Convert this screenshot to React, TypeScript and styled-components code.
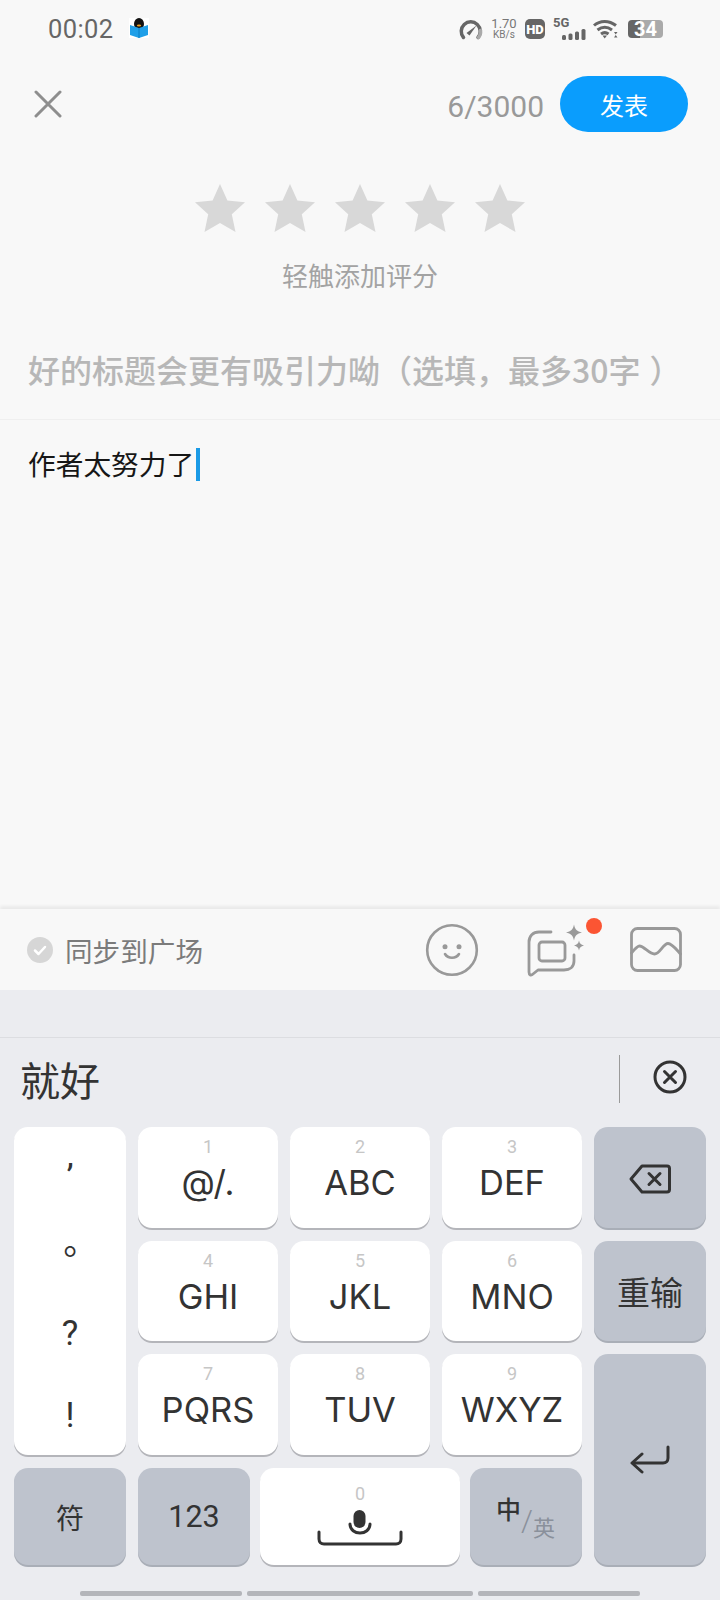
import React from "react";
import styled, { createGlobalStyle } from "styled-components";

const GlobalStyle = createGlobalStyle`
  html, body {
    margin: 0;
    padding: 0;
    background: #f8f8f8;
  }
  * {
    box-sizing: border-box;
  }
`;

const CJK = `"Noto Sans CJK SC", sans-serif`;
const LATIN = `Roboto, "Noto Sans CJK SC", sans-serif`;

const Page = styled.div`
  width: 720px;
  height: 1600px;
  display: flex;
  flex-direction: column;
  background: #f8f8f8;
  overflow: hidden;
  font-family: ${LATIN};
`;

const StatusBar = styled.div`
  height: 58px;
  display: flex;
  align-items: center;
  padding: 0 57px 0 48px;
  flex-shrink: 0;
`;

const Clock = styled.span`
  font-size: 25.5px;
  color: #666;
  letter-spacing: 0.4px;
  margin-right: 15px;
`;

const StatusRight = styled.div`
  margin-left: auto;
  display: flex;
  align-items: center;
`;

const Speed = styled.div`
  display: flex;
  flex-direction: column;
  align-items: center;
  width: 24px;
  margin: 0 9px 0 9px;
  color: #777;
`;

const SpeedValue = styled.span`
  font-size: 13px;
  line-height: 12px;
`;

const SpeedUnit = styled.span`
  font-size: 10px;
  line-height: 10px;
`;

const HdBadge = styled.span`
  width: 20px;
  height: 20px;
  border-radius: 5px;
  background: #666;
  color: #fff;
  font-size: 13px;
  font-weight: 900;
  display: flex;
  align-items: center;
  justify-content: center;
  margin-right: 8px;
`;

const Signal = styled.div`
  position: relative;
  width: 33px;
  height: 22px;
  margin-right: 7px;
`;

const SignalLabel = styled.span`
  position: absolute;
  left: 0;
  top: -1px;
  font-size: 13px;
  line-height: 12px;
  font-weight: 700;
  color: #666;
`;

const Battery = styled.div`
  width: 35px;
  height: 18px;
  margin-left: 10px;
  border-radius: 4px;
  background: linear-gradient(90deg, #666 0 34%, #aaa 34% 100%);
  color: #fff;
  font-size: 20px;
  font-weight: 700;
  display: flex;
  align-items: center;
  justify-content: center;
`;

const Header = styled.div`
  display: flex;
  align-items: center;
  margin-top: 18px;
  height: 56px;
  padding: 0 32px 0 34px;
  flex-shrink: 0;
`;

const Counter = styled.span`
  margin-left: auto;
  padding-top: 4px;
  font-size: 30px;
  color: #999;
`;

const PublishButton = styled.button`
  width: 128px;
  height: 56px;
  margin-left: 16px;
  border: 0;
  border-radius: 28px;
  background: #0a9dfd;
  color: #fff;
  font-family: ${CJK};
  font-size: 24px;
`;

const Rating = styled.div`
  margin-top: 52px;
  display: flex;
  flex-direction: column;
  align-items: center;
  flex-shrink: 0;
`;

const Stars = styled.div`
  display: flex;
  gap: 20px;
`;

const RatingHint = styled.div`
  margin-top: 28px;
  font-family: ${CJK};
  font-size: 26px;
  line-height: 30px;
  color: #a3a3a3;
`;

const TitleRow = styled.div`
  padding: 56px 0 27px 28px;
  font-family: ${CJK};
  font-size: 32px;
  font-weight: 500;
  line-height: 46px;
  color: #b7b7b7;
  border-bottom: 1px solid #efefef;
  white-space: nowrap;
  flex-shrink: 0;
`;

const TitleMark = styled.span<{ $before?: number }>`
  margin-left: ${(p) => p.$before ?? 0}px;
`;

const Body = styled.div`
  flex: 1;
  padding: 28px 0 0 28px;
  display: flex;
  align-items: flex-start;
  font-family: ${CJK};
  font-size: 27.7px;
  line-height: 30px;
  color: #161616;
`;

const Caret = styled.span`
  width: 4px;
  height: 33px;
  margin-left: 2px;
  background: #1a9ae6;
`;

const Toolbar = styled.div`
  height: 81px;
  display: flex;
  align-items: center;
  padding-left: 27px;
  background: #f8f8f8;
  box-shadow: 0 -3px 3px rgba(0, 0, 0, 0.06);
  position: relative;
  flex-shrink: 0;
`;

const SyncLabel = styled.span`
  margin-left: 12px;
  font-family: ${CJK};
  font-size: 27.6px;
  color: #7b7b7b;
`;

const ToolIcons = styled.div`
  margin-left: auto;
  display: flex;
  align-items: center;
`;

const Keyboard = styled.div`
  flex-shrink: 0;
  height: 610px;
  background: #ebecf0;
  display: flex;
  flex-direction: column;
`;

const ComposeBar = styled.div`
  margin-top: 47px;
  height: 90px;
  padding: 0 33px 8px 20px;
  border-top: 1px solid #dcdde1;
  display: flex;
  align-items: center;
  font-family: ${CJK};
  font-size: 40px;
  color: #333;
`;

const ComposeDivider = styled.span`
  margin-left: auto;
  width: 1px;
  height: 48px;
  background: #9a9a9a;
  margin-right: 33px;
`;

const KeyGrid = styled.div`
  display: grid;
  grid-template-columns: 112px 444px 112px;
  grid-template-rows: 101px 100px 101px 97px;
  column-gap: 12px;
  row-gap: 13px;
  padding: 0 14px;
`;

const KeyRow = styled.div<{ $gap: number }>`
  grid-column: 2;
  display: flex;
  gap: ${(p) => p.$gap}px;
`;

const Key = styled.div<{ $fn?: boolean; $span?: number; $width?: number }>`
  display: flex;
  flex-direction: column;
  align-items: center;
  justify-content: center;
  border-radius: 14px;
  background: ${(p) => (p.$fn ? "#bec3cd" : "#fff")};
  box-shadow: 0 2px 0 ${(p) => (p.$fn ? "#a9aeb7" : "#b4b5ba")};
  color: #333;
  ${(p) => (p.$span ? `grid-row: span ${p.$span};` : "")}
  ${(p) => (p.$width ? `width: ${p.$width}px; flex-shrink: 0;` : "flex: 1;")}
`;

const DigitHint = styled.span`
  font-size: 18px;
  line-height: 22px;
  color: #c6c6c6;
`;

const DigitLabel = styled.span`
  font-family: Inter, sans-serif;
  font-size: 34.5px;
  line-height: 46px;
  margin-top: 2px;
  margin-bottom: 13px;
`;

const PunctColumn = styled(Key)`
  justify-content: space-around;
`;

const PunctMark = styled.span`
  font-size: 35px;
  line-height: 48px;
  height: 44px;
`;

const Comma = styled(PunctMark)`
  line-height: 64px;
`;

const RoundStop = styled(PunctMark)`
  font-family: "Noto Sans CJK TC", sans-serif;
  line-height: 44px;
`;

const FnLabel = styled.span<{ $size: number }>`
  font-family: ${CJK};
  font-size: ${(p) => p.$size}px;
  color: #333;
`;

const NumLabel = styled.span`
  font-size: 30.5px;
`;

const SpaceHint = styled(DigitHint)`
  margin-bottom: 5px;
`;

const LangToggle = styled.div`
  display: flex;
  width: 60px;
  height: 42px;
  font-family: ${CJK};
`;

const LangMain = styled.span`
  align-self: flex-start;
  font-size: 25px;
  line-height: 25px;
  font-weight: 500;
  color: #333;
`;

const LangSlash = styled.span`
  align-self: flex-end;
  font-size: 30px;
  line-height: 34px;
  color: #8a909b;
  font-weight: 300;
  font-family: ${LATIN};
`;

const LangAlt = styled.span`
  align-self: flex-end;
  font-size: 22px;
  line-height: 24px;
  color: #8a909b;
`;

const HomeBar = styled.div`
  margin-top: 26px;
  padding-left: 80px;
  display: flex;
  gap: 5px;
`;

const HomeSegment = styled.span<{ $w: number }>`
  width: ${(p) => p.$w}px;
  height: 5px;
  border-radius: 2px;
  background: #b4b5ba;
`;

const StarIcon = () => (
  <svg width="50" height="48" viewBox="0 0 50 48">
    <path d="M25 0l7.4 16.4L50 18.3 36.800 30.300 40.500 48 25 39 9.500 48l3.700-17.700L0 18.300l17.600-1.900z" fill="#d8d8d8" />
  </svg>
);

const CloseIcon = () => (
  <svg width="28" height="28" viewBox="0 0 28 28" fill="none" stroke="#8e8e8e" strokeWidth="3" strokeLinecap="round">
    <path d="M2 2l24 24M26 2L2 26" />
  </svg>
);

const QqReadIcon = () => (
  <svg width="20" height="20" viewBox="0 0 20 20" style={{ marginBottom: 2 }}>
    <rect width="20" height="20" fill="#fff" />
    <ellipse cx="10" cy="6" rx="5" ry="6" fill="#111" />
    <ellipse cx="10" cy="7.500" rx="2.200" ry="1" fill="#f0a020" />
    <path d="M1 7l9 3 9-3v10l-9 3-9-3z" fill="#1f9fe8" />
    <path d="M10 10v10" stroke="#0b7fc4" strokeWidth="1" />
  </svg>
);

const GaugeIcon = () => (
  <svg width="24" height="21" viewBox="0 0 24 21" fill="none">
    <path d="M4.500 18.500A9.500 9.500 0 1 1 19 18.500" stroke="#666" strokeWidth="3.500" strokeLinecap="round" />
    <path d="M19.500 18.500a9.500 9.500 0 0 0 2-7" stroke="#aaa" strokeWidth="3.500" strokeLinecap="round" />
    <path d="M7.500 14L17.500 6.500 10.500 16.500z" fill="#666" />
  </svg>
);

const SignalBars = () => (
  <svg width="24" height="11" viewBox="0 0 24 11" fill="#666" style={{ position: "absolute", right: 0, bottom: 0 }}>
    <rect x="0" y="6" width="4" height="5" rx="1.500" />
    <rect x="6.500" y="4.500" width="4" height="6.500" rx="1.500" />
    <rect x="13" y="2.500" width="4" height="8.500" rx="1.500" />
    <rect x="19.500" y="0" width="4" height="11" rx="1.500" />
  </svg>
);

const WifiIcon = () => (
  <svg width="25" height="20" viewBox="0 0 25 20" fill="none" stroke="#666" strokeWidth="3">
    <path d="M1 6.500C7 1 16 1 23 6.500" />
    <path d="M4.500 11c4.500-3.500 10-3.500 14.500 0" />
    <path d="M8 15c2.500-1.800 5-1.800 7.500 0" />
    <path d="M9.500 16.500h4.500L11.700 19.500z" fill="#666" stroke="none" />
    <path d="M21 13h3.500L22.700 15.500zM21 18.500h3.500L22.700 16z" fill="#666" stroke="none" />
  </svg>
);

const CheckBadge = () => (
  <svg width="26" height="26" viewBox="0 0 26 26">
    <circle cx="13" cy="13" r="13" fill="#d6d6d6" />
    <path d="M8 13.500l3.500 3.500L18 10" fill="none" stroke="#fff" strokeWidth="2.500" strokeLinecap="round" strokeLinejoin="round" />
  </svg>
);

const SmileIcon = () => (
  <svg width="54" height="54" viewBox="0 0 54 54" fill="none" stroke="#999" strokeWidth="2.600" style={{ marginRight: 46 }}>
    <circle cx="27" cy="27" r="24.800" />
    <circle cx="20" cy="23.700" r="2.500" fill="#999" stroke="none" />
    <circle cx="34" cy="23.700" r="2.500" fill="#999" stroke="none" />
    <path d="M20 31c3 5 11 5 14 0" strokeLinecap="round" />
  </svg>
);

const AiChatIcon = () => (
  <svg width="78" height="64" viewBox="0 -2 78 64" fill="none" stroke="#999" strokeWidth="2.800" strokeLinecap="round" strokeLinejoin="round" style={{ marginRight: 27 }}>
    <path d="M26 12h-12c-6 0-10 4-10 10v30c0 3 2 4 4 2l5-4h26c6 0 10-3 10-9v-6" />
    <rect x="14" y="22" width="26" height="19" rx="3" />
    <path d="M49 4.500c1 5 3 7 8 8-5 1-7 3-8 8-1-5-3-7-8-8 5-1 7-3 8-8z" fill="#999" stroke="none" />
    <path d="M54 20.500c.6 3 1.800 4.200 5 5-3.200.8-4.400 2-5 5-.6-3-1.800-4.200-5-5 3.200-.8 4.400-2 5-5z" fill="#999" stroke="none" />
    <circle cx="69" cy="6" r="8" fill="#fb5533" stroke="none" />
  </svg>
);

const PictureIcon = () => (
  <svg width="52" height="45" viewBox="0 0 52 45" fill="none" stroke="#999" strokeWidth="2.800" strokeLinejoin="round" style={{ marginRight: 38 }}>
    <rect x="1.500" y="1.500" width="49" height="42" rx="6" />
    <path d="M1.500 26C4 23 7 19 9.500 19 14 19 19 27 24.500 27 30 27 33 16.500 38 16.500 42 16.500 46 22 50.500 27" strokeLinecap="round" />
  </svg>
);

const ClearIcon = () => (
  <svg width="34" height="34" viewBox="0 0 34 34" fill="none" stroke="#333" strokeWidth="3" strokeLinecap="round" style={{ marginBottom: 4 }}>
    <circle cx="17" cy="17" r="15" />
    <path d="M11.500 11.500l11 11M22.500 11.500l-11 11" />
  </svg>
);

const BackspaceIcon = () => (
  <svg width="42" height="30" viewBox="0 0 42 30" fill="none" stroke="#333" strokeWidth="3" strokeLinejoin="round" style={{ marginTop: 2 }}>
    <path d="M13 2h25c1.500 0 2.500 1 2.500 2.500v21c0 1.500-1 2.500-2.500 2.500H13L2 15z" />
    <path d="M20 9.500l11 11M31 9.500l-11 11" strokeLinecap="round" />
  </svg>
);

const EnterIcon = () => (
  <svg width="40" height="30" viewBox="0 0 40 30" fill="none" stroke="#333" strokeWidth="3" strokeLinecap="round" strokeLinejoin="round">
    <path d="M38 2v11c0 3-2 5-5 5H3" />
    <path d="M12 9l-10 9 10 9" />
  </svg>
);

const MicSpaceIcon = () => (
  <svg width="86" height="36" viewBox="0 0 86 36" fill="none" stroke="#333" strokeWidth="3" strokeLinecap="round" style={{ marginBottom: 4 }}>
    <rect x="36.500" y="0" width="12" height="18" rx="6" fill="#333" stroke="none" />
    <path d="M33 14c0 12 20 12 20 0" />
    <path d="M2 22v7c0 3 2 5 5 5h72c3 0 5-2 5-5v-7" />
  </svg>
);

const digitRows = [
  [
    ["1", "@/."],
    ["2", "ABC"],
    ["3", "DEF"],
  ],
  [
    ["4", "GHI"],
    ["5", "JKL"],
    ["6", "MNO"],
  ],
  [
    ["7", "PQRS"],
    ["8", "TUV"],
    ["9", "WXYZ"],
  ],
];

const DigitKeys = ({ row }: { row: string[][] }) => (
  <KeyRow $gap={12}>
    {row.map(([hint, label]) => (
      <Key key={hint}>
        <DigitHint>{hint}</DigitHint>
        <DigitLabel>{label}</DigitLabel>
      </Key>
    ))}
  </KeyRow>
);

const App: React.FC = () => {
  return (
    <Page>
      <GlobalStyle />
      <StatusBar>
        <Clock>00:02</Clock>
        <QqReadIcon />
        <StatusRight>
          <GaugeIcon />
          <Speed>
            <SpeedValue>1.70</SpeedValue>
            <SpeedUnit>KB/s</SpeedUnit>
          </Speed>
          <HdBadge>HD</HdBadge>
          <Signal>
            <SignalLabel>5G</SignalLabel>
            <SignalBars />
          </Signal>
          <WifiIcon />
          <Battery>34</Battery>
        </StatusRight>
      </StatusBar>

      <Header>
        <CloseIcon />
        <Counter>6/3000</Counter>
        <PublishButton>发表</PublishButton>
      </Header>

      <Rating>
        <Stars>
          {[0, 1, 2, 3, 4].map((i) => (
            <StarIcon key={i} />
          ))}
        </Stars>
        <RatingHint>轻触添加评分</RatingHint>
      </Rating>

      <TitleRow>
        好的标题会更有吸引力呦
        <TitleMark>（</TitleMark>
        选填
        <TitleMark>，</TitleMark>
        最多30字
        <TitleMark $before={9}>）</TitleMark>
      </TitleRow>

      <Body>
        作者太努力了
        <Caret />
      </Body>

      <Toolbar>
        <CheckBadge />
        <SyncLabel>同步到广场</SyncLabel>
        <ToolIcons>
          <SmileIcon />
          <AiChatIcon />
          <PictureIcon />
        </ToolIcons>
      </Toolbar>

      <Keyboard>
        <ComposeBar>
          就好
          <ComposeDivider />
          <ClearIcon />
        </ComposeBar>

        <KeyGrid>
          <PunctColumn $span={3}>
            <Comma>’</Comma>
            <RoundStop>。</RoundStop>
            <PunctMark>?</PunctMark>
            <PunctMark>!</PunctMark>
          </PunctColumn>

          <DigitKeys row={digitRows[0]} />
          <Key $fn>
            <BackspaceIcon />
          </Key>

          <DigitKeys row={digitRows[1]} />
          <Key $fn>
            <FnLabel $size={33}>重输</FnLabel>
          </Key>

          <DigitKeys row={digitRows[2]} />
          <Key $fn $span={2}>
            <EnterIcon />
          </Key>

          <Key $fn>
            <FnLabel $size={28}>符</FnLabel>
          </Key>
          <KeyRow $gap={10}>
            <Key $fn $width={112}>
              <NumLabel>123</NumLabel>
            </Key>
            <Key>
              <SpaceHint>0</SpaceHint>
              <MicSpaceIcon />
            </Key>
            <Key $fn $width={112}>
              <LangToggle>
                <LangMain>中</LangMain>
                <LangSlash>/</LangSlash>
                <LangAlt>英</LangAlt>
              </LangToggle>
            </Key>
          </KeyRow>
        </KeyGrid>

        <HomeBar>
          <HomeSegment $w={162} />
          <HomeSegment $w={226} />
          <HomeSegment $w={162} />
        </HomeBar>
      </Keyboard>
    </Page>
  );
};

export default App;
